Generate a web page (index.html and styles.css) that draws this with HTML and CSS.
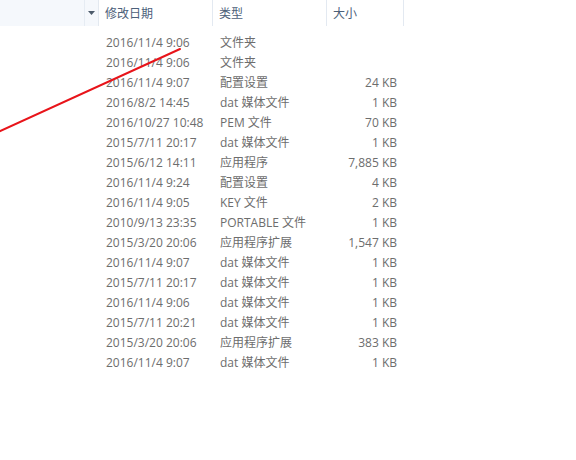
FILE: index.html
```html
<!DOCTYPE html>
<html lang="zh-CN">
<head>
<meta charset="utf-8">
<link rel="stylesheet" href="styles.css">
</head>
<body>
<div class="view">
  <div class="header">
    <div class="h-name"><span class="drop"><svg width="7" height="4" viewBox="0 0 7 4"><path d="M0 0h7L3.5 4z" fill="#4d5b6b"/></svg></span></div>
    <div class="h-col h-date">修改日期</div>
    <div class="h-col h-type">类型</div>
    <div class="h-col h-size">大小</div>
  </div>
  <div class="rows">
    <div class="row"><span class="c-date">2016/11/4 9:06</span><span class="c-type">文件夹</span><span class="c-size"></span></div>
    <div class="row"><span class="c-date">2016/11/4 9:06</span><span class="c-type">文件夹</span><span class="c-size"></span></div>
    <div class="row"><span class="c-date">2016/11/4 9:07</span><span class="c-type">配置设置</span><span class="c-size">24 KB</span></div>
    <div class="row"><span class="c-date">2016/8/2 14:45</span><span class="c-type">dat 媒体文件</span><span class="c-size">1 KB</span></div>
    <div class="row"><span class="c-date">2016/10/27 10:48</span><span class="c-type">PEM 文件</span><span class="c-size">70 KB</span></div>
    <div class="row"><span class="c-date">2015/7/11 20:17</span><span class="c-type">dat 媒体文件</span><span class="c-size">1 KB</span></div>
    <div class="row"><span class="c-date">2015/6/12 14:11</span><span class="c-type">应用程序</span><span class="c-size">7,885 KB</span></div>
    <div class="row"><span class="c-date">2016/11/4 9:24</span><span class="c-type">配置设置</span><span class="c-size">4 KB</span></div>
    <div class="row"><span class="c-date">2016/11/4 9:05</span><span class="c-type">KEY 文件</span><span class="c-size">2 KB</span></div>
    <div class="row"><span class="c-date">2010/9/13 23:35</span><span class="c-type">PORTABLE 文件</span><span class="c-size">1 KB</span></div>
    <div class="row"><span class="c-date">2015/3/20 20:06</span><span class="c-type">应用程序扩展</span><span class="c-size">1,547 KB</span></div>
    <div class="row"><span class="c-date">2016/11/4 9:07</span><span class="c-type">dat 媒体文件</span><span class="c-size">1 KB</span></div>
    <div class="row"><span class="c-date">2015/7/11 20:17</span><span class="c-type">dat 媒体文件</span><span class="c-size">1 KB</span></div>
    <div class="row"><span class="c-date">2016/11/4 9:06</span><span class="c-type">dat 媒体文件</span><span class="c-size">1 KB</span></div>
    <div class="row"><span class="c-date">2015/7/11 20:21</span><span class="c-type">dat 媒体文件</span><span class="c-size">1 KB</span></div>
    <div class="row"><span class="c-date">2015/3/20 20:06</span><span class="c-type">应用程序扩展</span><span class="c-size">383 KB</span></div>
    <div class="row"><span class="c-date">2016/11/4 9:07</span><span class="c-type">dat 媒体文件</span><span class="c-size">1 KB</span></div>
  </div>
  <svg class="mark" width="576" height="460" viewBox="0 0 576 460"><line x1="-2" y1="132" x2="180" y2="49" stroke="#e8141a" stroke-width="2" stroke-linecap="round"/></svg>
</div>
</body>
</html>
```
FILE: styles.css
```css
html, body {
  margin: 0;
  padding: 0;
  background: #ffffff;
}
.view {
  position: relative;
  width: 576px;
  height: 460px;
  overflow: hidden;
  font-family: "Open Sans", "Noto Sans CJK SC", sans-serif;
  font-size: 12px;
}
.header {
  display: flex;
  height: 26px;
}
.h-name {
  width: 99px;
  display: flex;
  justify-content: flex-end;
  background: #f5f8fc;
  border-right: 1px solid #e3e9f0;
  box-sizing: border-box;
}
.drop {
  width: 13px;
  border-left: 1px solid #e6ecf3;
  display: flex;
  align-items: center;
  justify-content: center;
}
.h-col {
  box-sizing: border-box;
  padding-left: 6px;
  padding-top: 1px;
  line-height: 26px;
  color: #4c607a;
  border-right: 1px solid #e3e9f1;
}
.h-date { width: 114px; }
.h-type { width: 114px; }
.h-size { width: 77px; }
.rows {
  padding-top: 7px;
}
.row {
  display: flex;
  height: 20px;
  line-height: 20px;
  color: #6d6d6d;
  white-space: nowrap;
}
.c-date {
  margin-left: 106px;
  width: 114px;
}
.c-type {
  width: 114px;
}
.c-size {
  width: 64px;
  text-align: right;
  margin-left: -1px;
}
.mark {
  position: absolute;
  left: 0;
  top: 0;
  pointer-events: none;
}
```
